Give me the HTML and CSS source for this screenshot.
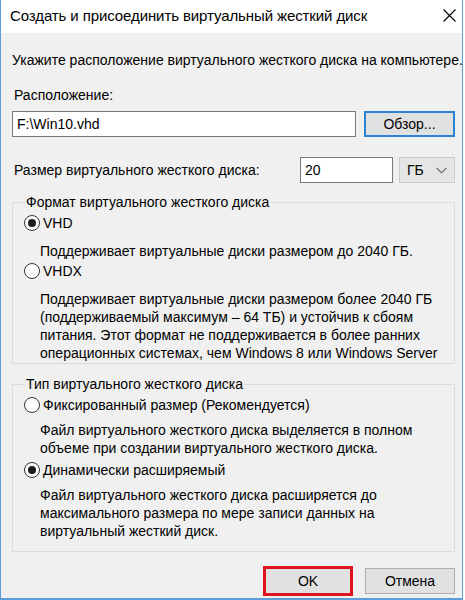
FILE: index.html
```html
<!DOCTYPE html>
<html lang="ru">
<head>
<meta charset="utf-8">
<title>Создать и присоединить виртуальный жесткий диск</title>
<link rel="stylesheet" href="styles.css">
</head>
<body>
<div class="window">
  <div class="titlebar">
    <span class="title">Создать и присоединить виртуальный жесткий диск</span>
    <svg class="close" width="13" height="13" viewBox="0 0 13 13"><path d="M0.5 0.5 L12.5 12.5 M12.5 0.5 L0.5 12.5" stroke="#000" stroke-width="1.1" fill="none"/></svg>
  </div>
  <div class="content">
    <div class="intro">Укажите расположение виртуального жесткого диска на компьютере.</div>
    <div class="label">Расположение:</div>
    <div class="row">
      <div class="textbox path">F:\Win10.vhd</div>
      <div class="btn btn-default">Обзор...</div>
    </div>
    <div class="row size-row">
      <div class="size-label">Размер виртуального жесткого диска:</div>
      <div class="textbox size">20</div>
      <div class="combo">ГБ<svg width="11" height="7" viewBox="0 0 11 7"><path d="M0.5 0.8 L5.5 5.8 L10.5 0.8" stroke="#606060" stroke-width="1.1" fill="none"/></svg></div>
    </div>
    <fieldset class="group group-format">
      <legend>Формат виртуального жесткого диска</legend>
      <div class="radio"><span class="dot checked"></span>VHD</div>
      <div class="desc">Поддерживает виртуальные диски размером до 2040 ГБ.</div>
      <div class="radio"><span class="dot"></span>VHDX</div>
      <div class="desc">Поддерживает виртуальные диски размером более 2040 ГБ<br>(поддерживаемый максимум – 64 ТБ) и устойчив к сбоям<br>питания. Этот формат не поддерживается в более ранних<br>операционных системах, чем Windows 8 или Windows Server</div>
    </fieldset>
    <fieldset class="group group-type">
      <legend>Тип виртуального жесткого диска</legend>
      <div class="radio"><span class="dot"></span>Фиксированный размер (Рекомендуется)</div>
      <div class="desc">Файл виртуального жесткого диска выделяется в полном<br>объеме при создании виртуального жесткого диска.</div>
      <div class="radio"><span class="dot checked"></span>Динамически расширяемый</div>
      <div class="desc">Файл виртуального жесткого диска расширяется до<br>максимального размера по мере записи данных на<br>виртуальный жесткий диск.</div>
    </fieldset>
    <div class="buttons">
      <div class="btn btn-ok">OK</div>
      <div class="btn btn-cancel">Отмена</div>
    </div>
  </div>
</div>
</body>
</html>
```
FILE: styles.css
```css
html, body {
  margin: 0;
  padding: 0;
  background: #ffffff;
}
body {
  font-family: "Liberation Sans", Arial, sans-serif;
  font-size: 14px;
  color: #000;
}
.window {
  width: 463px;
  height: 600px;
  box-sizing: border-box;
  border-left: 1px solid #5d9ed8;
  border-right: 1px solid #5d9ed8;
  border-bottom: 2px solid #5d9ed8;
  display: flex;
  flex-direction: column;
  background: #f0f0f0;
}
.titlebar {
  height: 33px;
  flex: none;
  background: #fff;
  display: flex;
  align-items: center;
  justify-content: space-between;
  padding: 0 6px 0 9px;
}
.title {
  font-size: 15px;
  line-height: 18px;
  margin-top: -2px;
  letter-spacing: -0.1px;
}
.close {
  margin-top: -3px;
}
.content {
  flex: 1;
  padding: 0 7px 0 11px;
  display: flex;
  flex-direction: column;
  line-height: 18px;
}
.intro {
  margin-top: 18px;
  white-space: nowrap;
}
.label {
  margin-top: 17px;
  margin-left: 2px;
}
.row {
  display: flex;
  align-items: center;
  margin-top: 7px;
  gap: 8px;
}
.textbox {
  height: 26px;
  box-sizing: border-box;
  background: #fff;
  border: 1px solid #7a7a7a;
  padding: 0 4px;
  line-height: 24px;
}
.path {
  width: 344px;
}
.btn {
  height: 26px;
  box-sizing: border-box;
  background: #e1e1e1;
  border: 1px solid #adadad;
  text-align: center;
  line-height: 24px;
}
.btn-default {
  width: 91px;
  border: 2px solid #2b84d2;
  line-height: 22px;
}
.size-row {
  margin-top: 20px;
  gap: 0;
}
.size-label {
  flex: 1;
  margin-left: 2px;
}
.size {
  width: 93px;
  margin-right: 6px;
}
.combo {
  width: 56px;
  height: 26px;
  box-sizing: border-box;
  background: #e5e5e5;
  border: 1px solid #cccccc;
  display: flex;
  align-items: center;
  justify-content: space-between;
  padding: 0 7px 0 7px;
}
.group {
  margin: 10px 0 0 0;
  padding: 2px 8px 0 11px;
  border: 1px solid #dcdcdc;
  min-width: 0;
}
.group legend {
  padding: 0 1px;
  margin-left: 1px;
  line-height: 18px;
}
.group-format {
  padding-bottom: 0;
}
.group-type {
  margin-top: 11px;
  padding-bottom: 8px;
}
.radio {
  display: flex;
  align-items: center;
  height: 20px;
  gap: 3px;
}
.dot {
  width: 16px;
  height: 16px;
  box-sizing: border-box;
  border: 1px solid #333;
  border-radius: 50%;
  background: #fff;
  display: flex;
  align-items: center;
  justify-content: center;
}
.dot.checked::after {
  content: "";
  width: 8px;
  height: 8px;
  border-radius: 50%;
  background: #1a1a1a;
}
.desc {
  margin-left: 16px;
  white-space: nowrap;
}
.group-format .desc {
  margin-top: 9px;
  margin-bottom: 1px;
}
.group-type .desc {
  margin-top: 6px;
  margin-bottom: 3px;
}
.buttons {
  margin-top: 14px;
  display: flex;
  justify-content: flex-end;
  align-items: center;
  gap: 12px;
}
.btn-ok {
  width: 90px;
  height: 30px;
  border: 3px solid #e0141e;
  line-height: 24px;
}
.btn-cancel {
  width: 90px;
}
```
